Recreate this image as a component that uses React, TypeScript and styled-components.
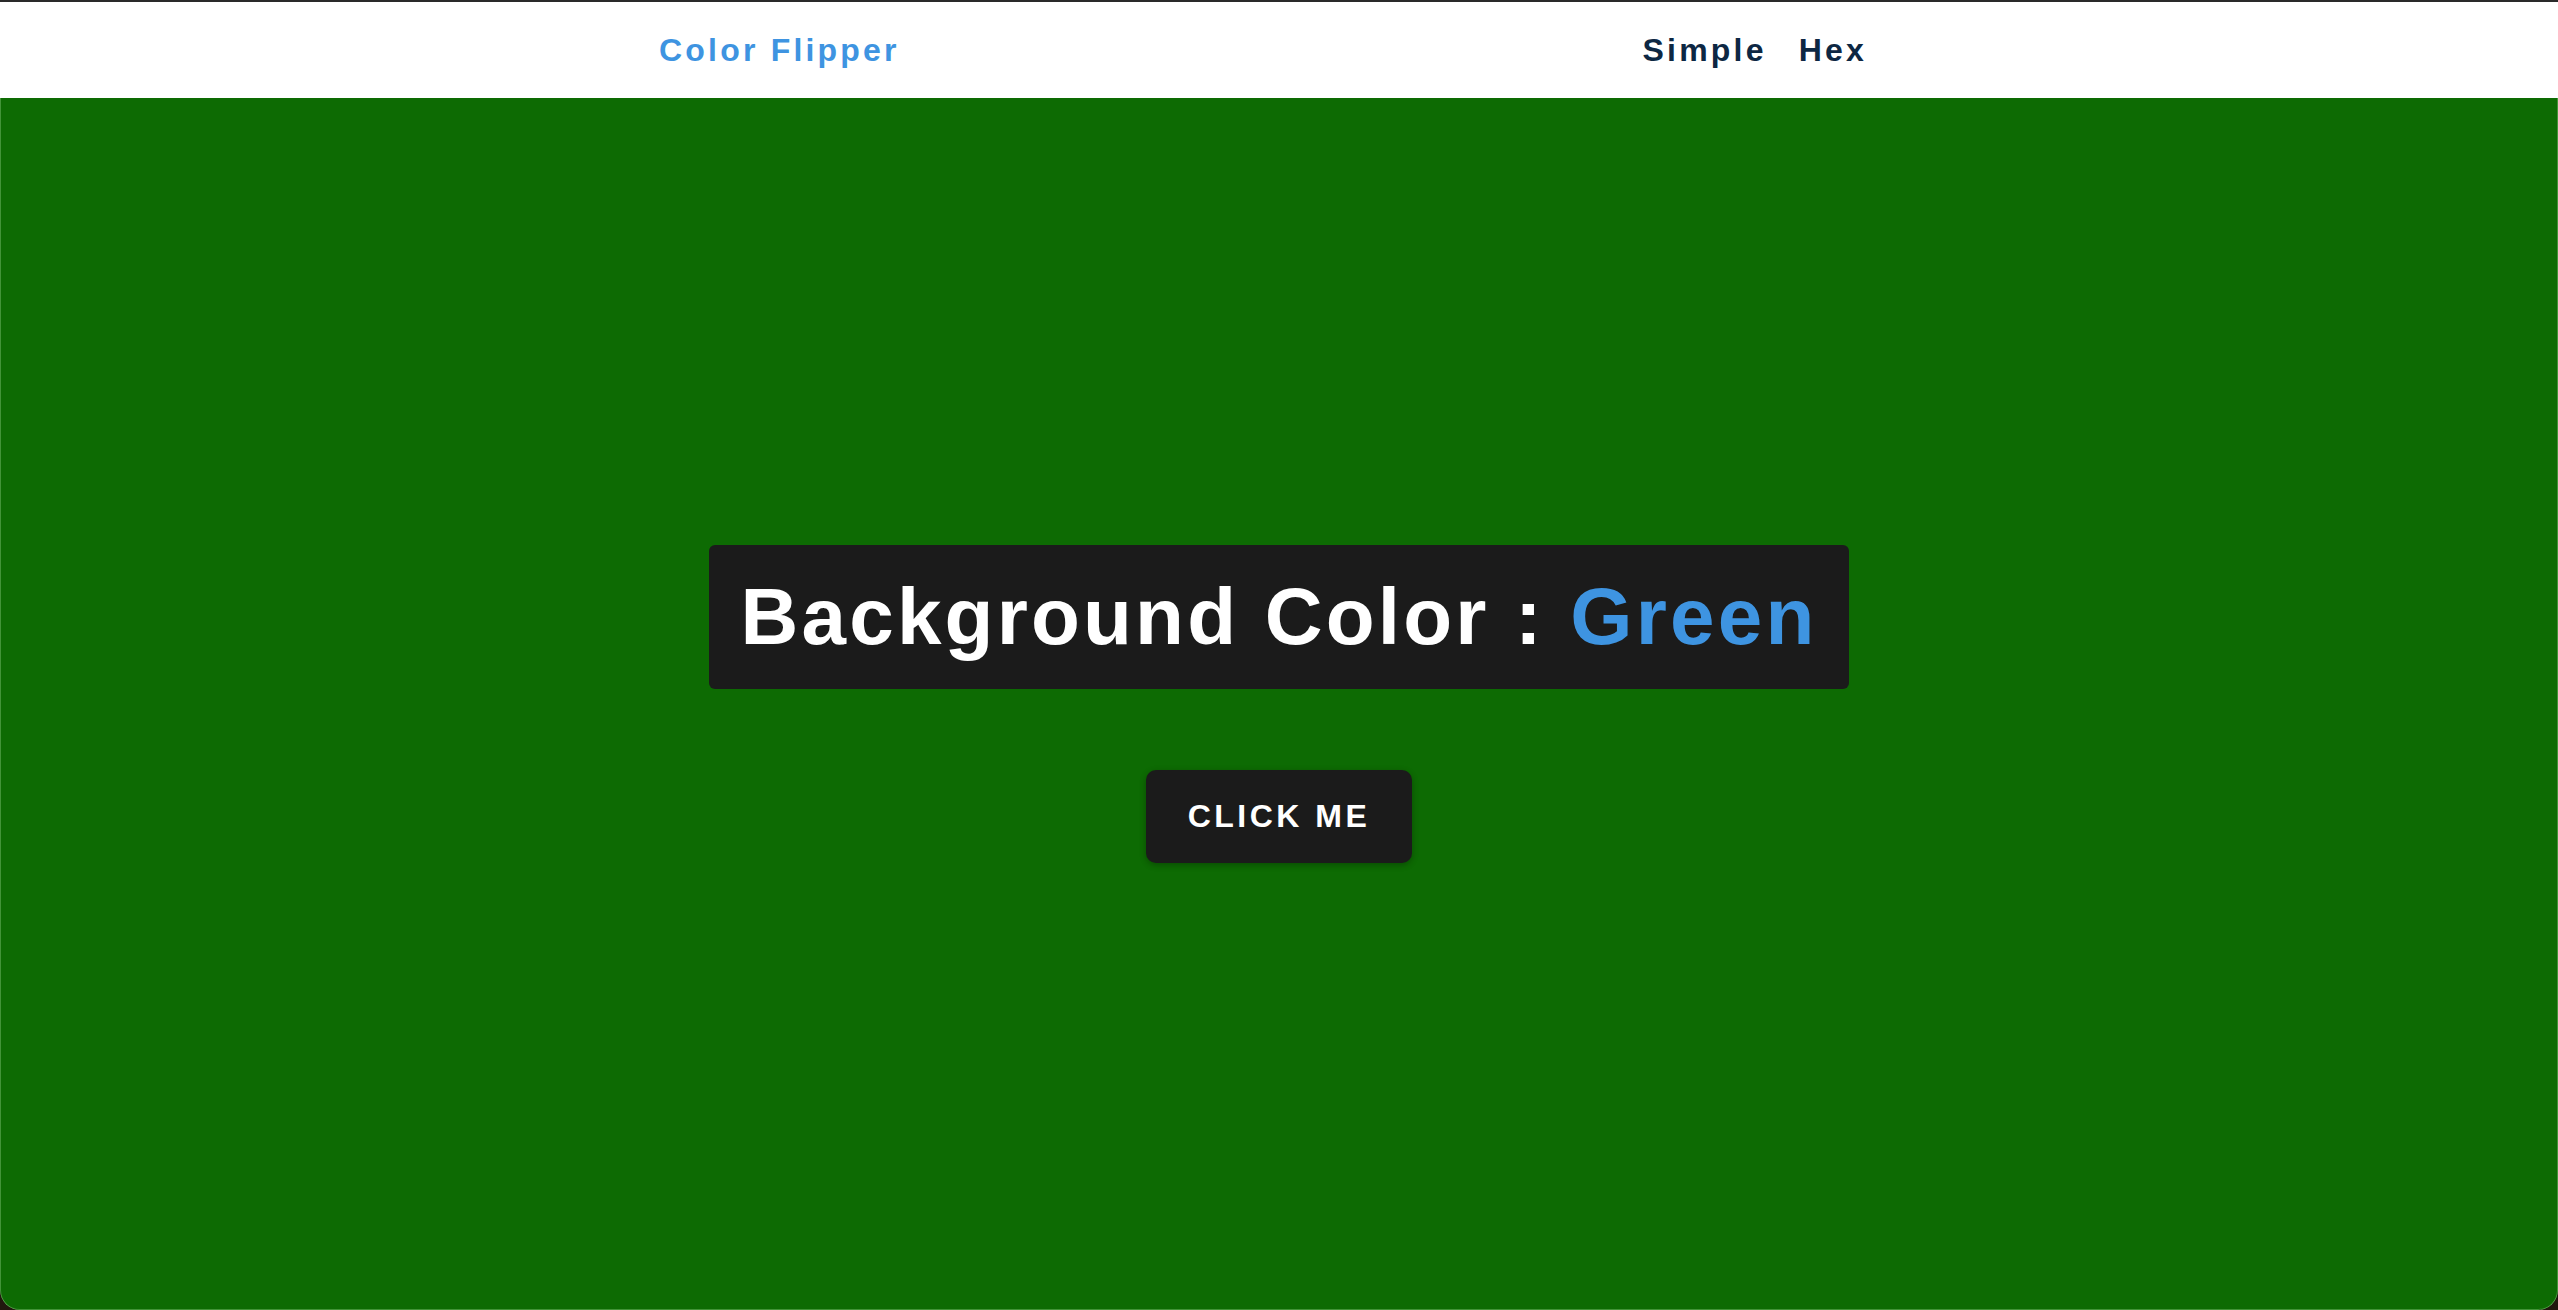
import React, { useState } from "react";
import styled, { createGlobalStyle } from "styled-components";

const GlobalStyle = createGlobalStyle`
  *, *::before, *::after { box-sizing: border-box; }
  html, body { margin: 0; padding: 0; }
  body {
    background: #21180e;
    font-family: "Liberation Sans", Arial, Helvetica, sans-serif;
  }
`;

const Window = styled.div`
  height: 100vh;
  display: flex;
  flex-direction: column;
  border-top: 2px solid #2a2a2a;
  border-radius: 0 0 20px 20px;
  overflow: hidden;
  box-shadow: inset 1px 0 0 rgba(255, 255, 255, 0.18), inset -1px 0 0 rgba(255, 255, 255, 0.18);
`;

const Nav = styled.nav`
  height: 96px;
  flex-shrink: 0;
  background: #ffffff;
  display: flex;
  align-items: center;
`;

const NavCenter = styled.div`
  width: 1240px;
  margin: 0 auto;
  display: flex;
  align-items: center;
  justify-content: space-between;
`;

const Brand = styled.h4`
  margin: 0;
  font-size: 32px;
  font-weight: 700;
  letter-spacing: 3.2px;
  color: #3e94e1;
`;

const Links = styled.ul`
  margin: 0;
  padding: 0;
  list-style: none;
  display: flex;
`;

const LinkItem = styled.li`
  margin-right: 32px;
`;

const NavLink = styled.a`
  font-size: 32px;
  font-weight: 700;
  letter-spacing: 3.2px;
  color: #0d2743;
  text-decoration: none;
`;

const Main = styled.main<{ $bg: string }>`
  flex: 1;
  background: ${(p) => p.$bg};
  display: flex;
  flex-direction: column;
  align-items: center;
  justify-content: center;
  box-shadow: inset 1px 0 0 rgba(120, 190, 110, 0.5), inset -1px 0 0 rgba(120, 190, 110, 0.5),
    inset 0 -1px 0 rgba(120, 190, 110, 0.5);
  border-radius: 0 0 20px 20px;
`;

const Heading = styled.h2`
  margin: 0 0 81px;
  padding: 32px;
  background: #1b1b1b;
  border-radius: 6px;
  font-size: 80px;
  line-height: 80px;
  font-weight: 700;
  letter-spacing: 3.2px;
  color: #ffffff;
`;

const ColorName = styled.span`
  color: #3e94e1;
`;

const Button = styled.button`
  padding: 28px 42px;
  border: none;
  border-radius: 10px;
  background: #1b1b1b;
  color: #ffffff;
  font-family: "Liberation Sans", Arial, Helvetica, sans-serif;
  font-size: 32px;
  line-height: 37px;
  font-weight: 700;
  letter-spacing: 3.5px;
  text-transform: uppercase;
  cursor: pointer;
  box-shadow: 0 2px 6px rgba(0, 0, 0, 0.3);
`;

const colors: { name: string; value: string }[] = [
  { name: "Green", value: "#0d6b03" },
  { name: "Red", value: "#b3261e" },
  { name: "Blue", value: "#1e4fb3" },
  { name: "Purple", value: "#6a1b9a" },
];

export default function App() {
  const [idx, setIdx] = useState(0);
  const current = colors[idx];
  return (
    <>
      <GlobalStyle />
      <Window>
        <Nav>
          <NavCenter>
            <Brand>Color Flipper</Brand>
            <Links>
              <LinkItem>
                <NavLink href="#">Simple</NavLink>
              </LinkItem>
              <LinkItem>
                <NavLink href="#">Hex</NavLink>
              </LinkItem>
            </Links>
          </NavCenter>
        </Nav>
        <Main $bg={current.value}>
          <Heading>
            Background Color : <ColorName>{current.name}</ColorName>
          </Heading>
          <Button onClick={() => setIdx((i) => (i + 1) % colors.length)}>click me</Button>
        </Main>
      </Window>
    </>
  );
}
